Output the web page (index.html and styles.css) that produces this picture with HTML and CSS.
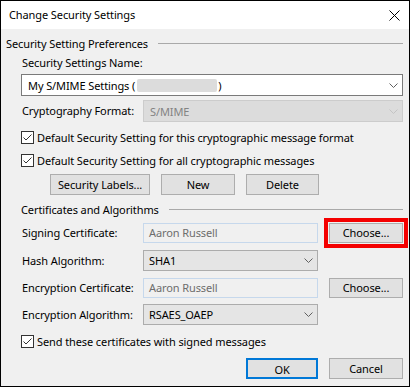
FILE: index.html
```html
<!DOCTYPE html>
<html lang="en">
<head>
    <meta charset="UTF-8">
    <title>Change Security Settings</title>
    <link rel="stylesheet" href="styles.css">
</head>
<body>
    <div class="window">
        <div class="titlebar">
            <span class="title">Change Security Settings</span>
            <svg class="close" width="11" height="11" viewBox="0 0 11 11">
                <path d="M0.5 0.5 L10.5 10.5 M10.5 0.5 L0.5 10.5" stroke="#000" stroke-width="1" fill="none"/>
            </svg>
        </div>

        <div class="content">
            <div class="group-head group-top">
                <span>Security Setting Preferences</span>
                <div class="rule"></div>
            </div>

            <div class="indent">
                <div class="label-line">Security Settings Name:</div>
                <div class="combo combo-name">
                    <span>My S/MIME Settings (<span class="redacted"></span>)</span>
                    <svg class="chevron" width="9" height="5" viewBox="0 0 9 5"><path d="M0.5 0.5 L4.5 4.5 L8.5 0.5" stroke="#606060" fill="none"/></svg>
                </div>

                <div class="format-row">
                    <span class="label">Cryptography Format:</span>
                    <div class="combo combo-disabled">
                        <span>S/MIME</span>
                        <svg class="chevron" width="9" height="5" viewBox="0 0 9 5"><path d="M0.5 0.5 L4.5 4.5 L8.5 0.5" stroke="#c4c4c4" fill="none"/></svg>
                    </div>
                </div>

                <div class="check-row check-first">
                    <svg class="checkbox" width="13" height="13" viewBox="0 0 13 13"><rect x="0.5" y="0.5" width="12" height="12" fill="#fff" stroke="#333"/><path d="M2.5 6.5 L5 9 L10.5 3.5" stroke="#333" fill="none"/></svg>
                    <span>Default Security Setting for this cryptographic message format</span>
                </div>
                <div class="check-row check-second">
                    <svg class="checkbox" width="13" height="13" viewBox="0 0 13 13"><rect x="0.5" y="0.5" width="12" height="12" fill="#fff" stroke="#333"/><path d="M2.5 6.5 L5 9 L10.5 3.5" stroke="#333" fill="none"/></svg>
                    <span>Default Security Setting for all cryptographic messages</span>
                </div>

                <div class="button-row">
                    <button class="btn btn-labels">Security Labels...</button>
                    <button class="btn btn-new">New</button>
                    <button class="btn btn-delete">Delete</button>
                </div>

                <div class="group-head group-certs">
                    <span>Certificates and Algorithms</span>
                    <div class="rule"></div>
                </div>

                <div class="field-row row-signing">
                    <span class="label">Signing Certificate:</span>
                    <div class="textbox">Aaron Russell</div>
                    <button class="btn btn-choose highlighted">Choose...</button>
                </div>
                <div class="field-row row-hash">
                    <span class="label">Hash Algorithm:</span>
                    <div class="combo combo-list">
                        <span>SHA1</span>
                        <svg class="chevron" width="9" height="5" viewBox="0 0 9 5"><path d="M0.5 0.5 L4.5 4.5 L8.5 0.5" stroke="#606060" fill="none"/></svg>
                    </div>
                </div>
                <div class="field-row row-enc-cert">
                    <span class="label">Encryption Certificate:</span>
                    <div class="textbox">Aaron Russell</div>
                    <button class="btn btn-choose">Choose...</button>
                </div>
                <div class="field-row row-enc-alg">
                    <span class="label">Encryption Algorithm:</span>
                    <div class="combo combo-list">
                        <span>RSAES_OAEP</span>
                        <svg class="chevron" width="9" height="5" viewBox="0 0 9 5"><path d="M0.5 0.5 L4.5 4.5 L8.5 0.5" stroke="#606060" fill="none"/></svg>
                    </div>
                </div>

                <div class="check-row check-send">
                    <svg class="checkbox" width="13" height="13" viewBox="0 0 13 13"><rect x="0.5" y="0.5" width="12" height="12" fill="#fff" stroke="#333"/><path d="M2.5 6.5 L5 9 L10.5 3.5" stroke="#333" fill="none"/></svg>
                    <span>Send these certificates with signed messages</span>
                </div>

                <div class="dialog-buttons">
                    <button class="btn btn-ok">OK</button>
                    <button class="btn btn-cancel">Cancel</button>
                </div>
            </div>
        </div>
    </div>
</body>
</html>
```

FILE: styles.css
```css
* {
    margin: 0;
    padding: 0;
    box-sizing: border-box;
}

body {
    font-family: "Noto Sans", "Open Sans", sans-serif;
    font-size: 11px;
    letter-spacing: -0.1px;
    color: #000;
    background: #fff;
    white-space: nowrap;
}

.window {
    width: 410px;
    height: 387px;
    border: 1px solid #000;
    background: #f0f0f0;
    display: flex;
    flex-direction: column;
}

.titlebar {
    height: 28px;
    background: #fff;
    display: flex;
    align-items: center;
    justify-content: space-between;
    padding: 0 9px 0 8px;
}

.title {
    font-size: 11px;
    line-height: 16px;
}

.close {
    display: block;
}

.content {
    padding: 0 6px 0 5px;
    display: flex;
    flex-direction: column;
}

.group-head {
    display: flex;
    align-items: center;
    height: 16px;
    line-height: 16px;
}

.group-head .rule {
    flex: 1;
    height: 1px;
    background: #a9a9a9;
    margin-left: 10px;
    margin-top: -2px;
}

.group-top {
    margin-top: 7px;
}

.indent {
    margin-left: 15px;
    display: flex;
    flex-direction: column;
}

.label-line,
.label {
    padding-left: 1px;
    line-height: 16px;
}

.label-line {
    margin-top: 3px;
    height: 16px;
}

.combo {
    display: flex;
    align-items: center;
    justify-content: space-between;
    padding: 0 4px 0 6px;
    border: 1px solid #7a7a7a;
    background: #fff;
}

.combo-name {
    margin-top: 3px;
    height: 22px;
}

.redacted {
    display: inline-block;
    width: 80px;
    height: 13px;
    margin: 0 1px 0 2px;
    background: #dcdcdc;
    border-radius: 2px;
    vertical-align: -2px;
}

.format-row {
    margin-top: 4px;
    height: 22px;
    display: grid;
    grid-template-columns: 122px 1fr;
    align-items: center;
}

.format-row .combo {
    height: 22px;
}

.combo-disabled {
    background: #dcdcdc;
    border-color: #cccccc;
    color: #838383;
}

.combo-list {
    background: #e5e5e5;
    border-color: #acacac;
    padding-left: 5px;
}

.check-row {
    display: flex;
    align-items: center;
    height: 16px;
    gap: 3px;
}

.checkbox {
    display: block;
    flex-shrink: 0;
}

.check-first {
    margin-top: 7px;
}

.check-second {
    margin-top: 7px;
}

.button-row {
    margin-top: 6px;
    margin-left: 29px;
    display: flex;
    gap: 11px;
}

.btn {
    font-family: inherit;
    font-size: 11px;
    letter-spacing: -0.1px;
    color: #000;
    background: #e1e1e1;
    border: 1px solid #adadad;
    height: 21px;
    line-height: 19px;
    text-align: center;
}

.btn-labels {
    width: 100px;
}

.btn-new {
    width: 74px;
}

.btn-delete {
    width: 73px;
}

.group-certs {
    margin-top: 7px;
}

.field-row {
    display: grid;
    grid-template-columns: 122px 175px 1fr;
    align-items: center;
}

.field-row .combo {
    height: 21px;
}

.textbox {
    height: 20px;
    border: 1px solid #c6d8ec;
    background: #f0f0f0;
    color: #6d6d6d;
    padding-left: 5px;
    line-height: 18px;
}

.btn-choose {
    justify-self: end;
    width: 74px;
    height: 20px;
    line-height: 18px;
}

.highlighted {
    outline: 4px solid #f40000;
    outline-offset: 1px;
}

.row-signing {
    margin-top: 5px;
    height: 20px;
}

.row-hash {
    margin-top: 7px;
    height: 21px;
}

.row-enc-cert {
    margin-top: 7px;
    height: 20px;
}

.row-enc-alg {
    margin-top: 6px;
    height: 21px;
}

.check-send {
    margin-top: 8px;
}

.dialog-buttons {
    margin-top: 9px;
    display: flex;
    justify-content: flex-end;
    gap: 11px;
}

.btn-ok {
    width: 72px;
    border: 2px solid #0078d7;
}

.btn-cancel {
    width: 74px;
}
```
